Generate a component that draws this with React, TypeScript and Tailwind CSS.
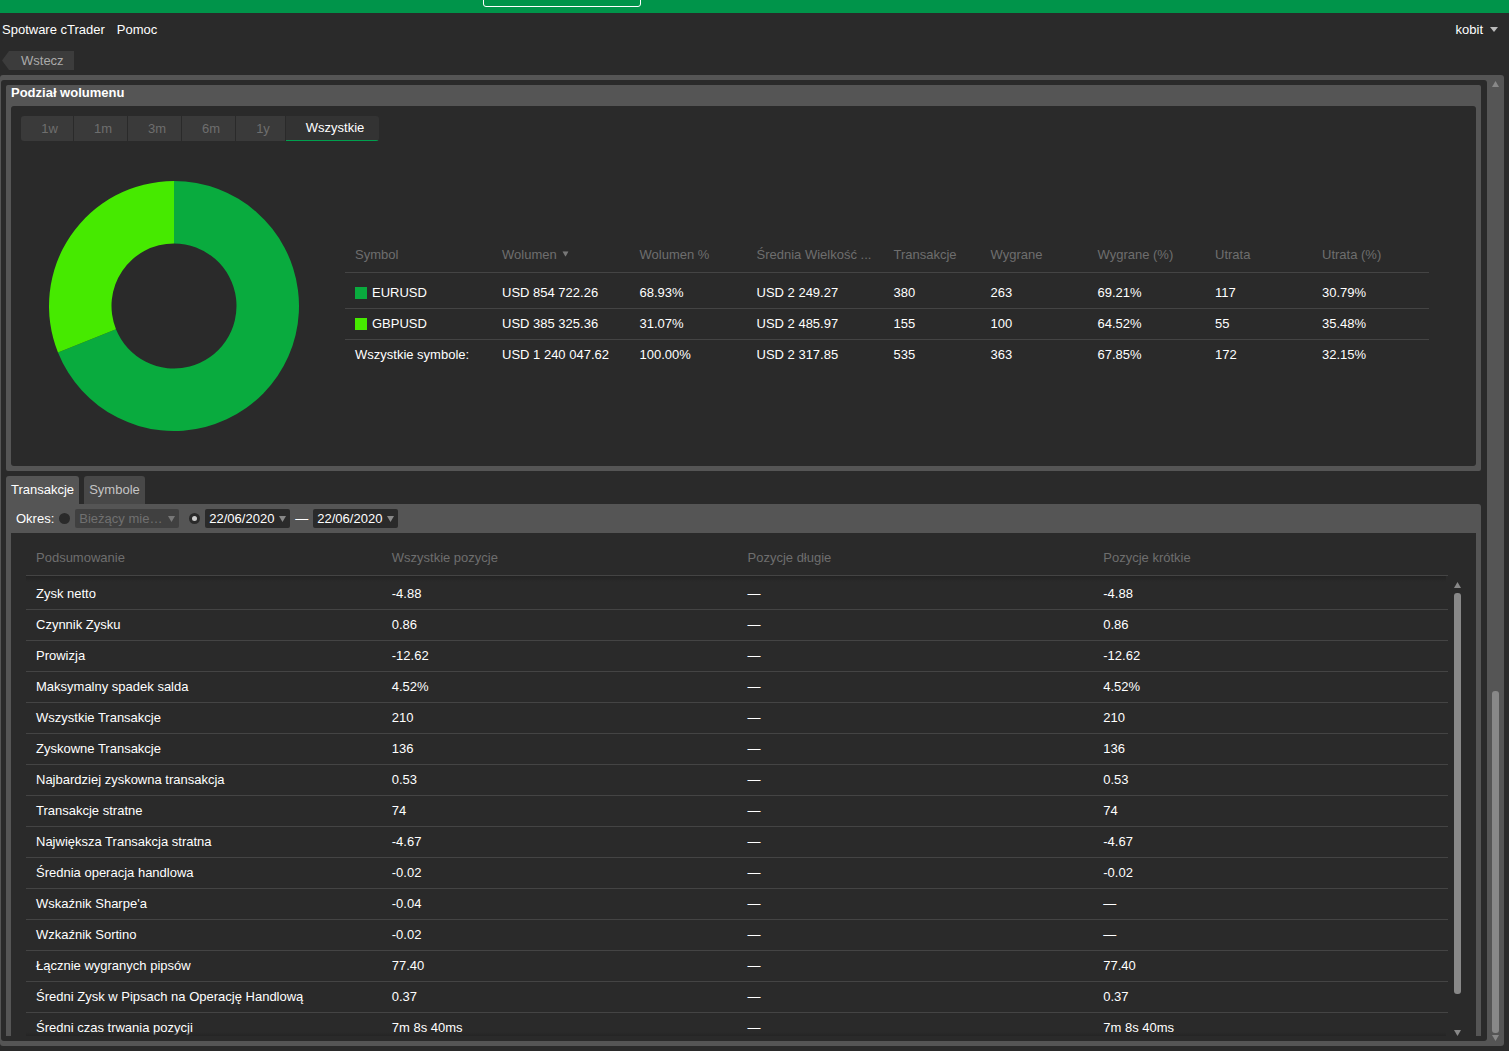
import React from "react";

const symCols = "grid grid-cols-[147px_137.5px_117px_137px_97px_107px_117.5px_107px_117px]";

const volumeRows = [
  { sym: "EURUSD", color: "bg-[#09ab3e]", v: ["USD 854 722.26", "68.93%", "USD 2 249.27", "380", "263", "69.21%", "117", "30.79%"] },
  { sym: "GBPUSD", color: "bg-[#46ea00]", v: ["USD 385 325.36", "31.07%", "USD 2 485.97", "155", "100", "64.52%", "55", "35.48%"] },
];
const volumeTotal = ["USD 1 240 047.62", "100.00%", "USD 2 317.85", "535", "363", "67.85%", "172", "32.15%"];

const summary: [string, string, string, string][] = [
  ["Zysk netto", "-4.88", "—", "-4.88"],
  ["Czynnik Zysku", "0.86", "—", "0.86"],
  ["Prowizja", "-12.62", "—", "-12.62"],
  ["Maksymalny spadek salda", "4.52%", "—", "4.52%"],
  ["Wszystkie Transakcje", "210", "—", "210"],
  ["Zyskowne Transakcje", "136", "—", "136"],
  ["Najbardziej zyskowna transakcja", "0.53", "—", "0.53"],
  ["Transakcje stratne", "74", "—", "74"],
  ["Największa Transakcja stratna", "-4.67", "—", "-4.67"],
  ["Średnia operacja handlowa", "-0.02", "—", "-0.02"],
  ["Wskaźnik Sharpe'a", "-0.04", "—", "—"],
  ["Wzkaźnik Sortino", "-0.02", "—", "—"],
  ["Łącznie wygranych pipsów", "77.40", "—", "77.40"],
  ["Średni Zysk w Pipsach na Operację Handlową", "0.37", "—", "0.37"],
  ["Średni czas trwania pozycji", "7m 8s 40ms", "—", "7m 8s 40ms"],
];

function polar(r: number, pct: number) {
  const a = (pct / 100) * 2 * Math.PI;
  return [125 + r * Math.sin(a), 125 - r * Math.cos(a)];
}
function slice(from: number, to: number) {
  const R = 125;
  const r = 62.5;
  const [x1, y1] = polar(R, from);
  const [x2, y2] = polar(R, to);
  const [x3, y3] = polar(r, to);
  const [x4, y4] = polar(r, from);
  const large = to - from > 50 ? 1 : 0;
  return `M${x1} ${y1}A${R} ${R} 0 ${large} 1 ${x2} ${y2}L${x3} ${y3}A${r} ${r} 0 ${large} 0 ${x4} ${y4}Z`;
}

function Caret({ className = "" }: { className?: string }) {
  return (
    <svg width="7" height="6" viewBox="0 0 7 6" className={className}>
      <path d="M0 0H7L3.5 6Z" fill="currentColor" />
    </svg>
  );
}
function CaretUp({ className = "" }: { className?: string }) {
  return (
    <svg width="7" height="6" viewBox="0 0 7 6" className={className}>
      <path d="M0 6H7L3.5 0Z" fill="currentColor" />
    </svg>
  );
}

function Select({ label, dim }: { label: string; dim?: boolean }) {
  return (
    <div
      className={`flex h-[19px] items-center justify-between rounded-[2px] pl-[4px] pr-[4px] ${
        dim ? "w-[104px] bg-[#404040] text-[#707070]" : "w-[85px] bg-[#2a2a2a] text-white"
      }`}
    >
      <span>{label}</span>
      <Caret className={dim ? "text-[#777777]" : "text-[#888888]"} />
    </div>
  );
}

export default function App() {
  return (
    <div className="flex h-[1051px] w-full flex-col overflow-hidden bg-[#2a2a2a] font-['Liberation_Sans',Arial,sans-serif] text-[13px] leading-none text-white">
      {/* Top bar */}
      <div className="relative h-[13px] shrink-0 bg-[#00944a]">
        <div className="absolute left-[483px] top-[-6px] h-[13px] w-[158px] rounded-[3px] border border-white bg-[#00944a]" />
      </div>

      {/* Nav */}
      <div className="flex h-[32px] shrink-0 items-center justify-between pl-[2px] pr-[11px]">
        <div className="flex gap-[12px]">
          <span>Spotware cTrader</span>
          <span>Pomoc</span>
        </div>
        <div className="flex items-center gap-[7px]">
          <span>kobit</span>
          <svg width="8" height="5" viewBox="0 0 8 5" className="text-[#bbbbbb]">
            <path d="M0 0H8L4 5Z" fill="currentColor" />
          </svg>
        </div>
      </div>

      {/* Back */}
      <div className="mt-[6px] h-[19px] shrink-0 pl-[2px]">
        <div className="flex h-[19px] w-[72px] items-center bg-[#3c3c3c] pl-[19px] text-[#aaaaaa] [clip-path:polygon(0_50%,7px_0,100%_0,100%_100%,7px_100%)]">
          Wstecz
        </div>
      </div>

      {/* Scrollable frame */}
      <div className="mt-[5px] flex h-[971px] w-[1504px] shrink-0 overflow-hidden rounded-[3px] bg-[#555555] pb-[5px] pl-[1px] pt-[5px]">
        <div className="min-w-0 flex-1 overflow-hidden rounded-[3px] bg-[#2a2a2a] pl-[5px] pr-[6px] pt-[5px]">
          {/* Volume panel */}
          <section className="flex h-[386px] flex-col rounded-[2px] bg-[#555555] px-[5px] pb-[5px]">
            <h2 className="flex h-[21px] shrink-0 items-center pb-[6px] text-[13px] font-bold">Podział wolumenu</h2>
            <div className="flex-1 rounded-[3px] bg-[#2a2a2a] pl-[10px] pt-[10px]">
              <div className="flex h-[25px] w-[358px] gap-[1px] overflow-hidden rounded-[3px] text-[#6e6e6e]">
                <div className="flex w-[52px] items-center justify-center bg-[#3a3a3a] pl-[5px]">1w</div>
                <div className="flex w-[53px] items-center justify-center bg-[#3a3a3a] pl-[5px]">1m</div>
                <div className="flex w-[53px] items-center justify-center bg-[#3a3a3a] pl-[5px]">3m</div>
                <div className="flex w-[53px] items-center justify-center bg-[#3a3a3a] pl-[5px]">6m</div>
                <div className="flex w-[49px] items-center justify-center bg-[#3a3a3a] pl-[5px]">1y</div>
                <div className="flex w-[93px] items-center justify-center border-b border-[#00a04e] bg-[#333333] pb-[2px] pl-[5px] text-white">
                  Wszystkie
                </div>
              </div>

              <div className="mt-[40px] flex items-center">
                <svg width="250" height="250" viewBox="0 0 250 250" className="ml-[28px] shrink-0">
                  <path d={slice(0, 68.93)} fill="#09ab3e" />
                  <path d={slice(68.93, 100)} fill="#46ea00" />
                </svg>
                <div className="ml-[46px] w-[1084px]">
                  <div className={`${symCols} h-[31px] items-center border-b border-[#444444] pb-[6px] text-[#6e6e6e]`}>
                    <div className="pl-[10px]">Symbol</div>
                    <div className="flex items-center gap-[5px] pl-[10px]">
                      Wolumen
                      <Caret className="scale-90 text-[#777777]" />
                    </div>
                    <div className="pl-[10px]">Wolumen %</div>
                    <div className="whitespace-nowrap pl-[10px]">Średnia Wielkość ...</div>
                    <div className="pl-[10px]">Transakcje</div>
                    <div className="pl-[10px]">Wygrane</div>
                    <div className="pl-[10px]">Wygrane (%)</div>
                    <div className="pl-[10px]">Utrata</div>
                    <div className="pl-[10px]">Utrata (%)</div>
                  </div>
                  <div className="h-[5px]" />
                  {volumeRows.map((r) => (
                    <div key={r.sym} className={`${symCols} h-[31px] items-center border-b border-[#444444] pb-[1px]`}>
                      <div className="flex items-center gap-[5px] pl-[10px]">
                        <span className={`h-[12px] w-[12px] ${r.color}`} />
                        {r.sym}
                      </div>
                      {r.v.map((c, i) => (
                        <div key={i} className="pl-[10px]">
                          {c}
                        </div>
                      ))}
                    </div>
                  ))}
                  <div className={`${symCols} h-[30px] items-center pb-[1px]`}>
                    <div className="pl-[10px]">Wszystkie symbole:</div>
                    {volumeTotal.map((c, i) => (
                      <div key={i} className="pl-[10px]">
                        {c}
                      </div>
                    ))}
                  </div>
                </div>
              </div>
            </div>
          </section>

          {/* Tabs */}
          <div className="mt-[5px] flex h-[28px] gap-[5px]">
            <div className="flex w-[73px] items-center justify-center rounded-t-[3px] bg-[#555555] pb-[2px]">Transakcje</div>
            <div className="flex w-[61px] items-center justify-center rounded-t-[3px] bg-[#484848] pb-[2px] text-[#c4c4c4]">
              Symbole
            </div>
          </div>

          {/* Summary panel */}
          <section className="flex h-[532px] flex-col overflow-hidden rounded-tr-[3px] bg-[#555555] px-[5px]">
            <div className="flex h-[29px] shrink-0 items-center pl-[5px]">
              <span className="mr-[5px]">Okres:</span>
              <span className="mr-[5px] h-[11px] w-[11px] rounded-full bg-[#2a2a2a]" />
              <Select label="Bieżący mie…" dim />
              <span className="ml-[10px] mr-[5px] flex h-[11px] w-[11px] items-center justify-center rounded-full bg-[#2a2a2a]">
                <span className="h-[5px] w-[5px] rounded-full bg-[#cccccc]" />
              </span>
              <Select label="22/06/2020" />
              <span className="mx-[5px]">—</span>
              <Select label="22/06/2020" />
            </div>

            <div className="relative min-h-0 flex-1 overflow-hidden bg-[#2a2a2a] pl-[15px]">
              <div className="grid h-[43px] w-[1422px] grid-cols-[repeat(4,355.75px)] items-center border-b border-[#444444] pt-[6px] text-[#6e6e6e]">
                <div className="pl-[10px]">Podsumowanie</div>
                <div className="pl-[10px]">Wszystkie pozycje</div>
                <div className="pl-[10px]">Pozycje długie</div>
                <div className="pl-[10px]">Pozycje krótkie</div>
              </div>
              <div className="mt-[3px] w-[1422px]">
                {summary.map((r) => (
                  <div key={r[0]} className="grid h-[31px] grid-cols-[repeat(4,355.75px)] items-center border-b border-[#444444] pb-[2px]">
                    {r.map((c, i) => (
                      <div key={i} className="pl-[10px]">
                        {c}
                      </div>
                    ))}
                  </div>
                ))}
              </div>

              {/* Scroll shadows over the list */}
              <div className="absolute left-[15px] top-[43px] h-[6px] w-[1420px] bg-gradient-to-b from-[#232323] to-[#2a2a2a00]" />
              <div className="absolute bottom-0 left-[15px] h-[4px] w-[1420px] bg-gradient-to-t from-[#242424] to-[#2a2a2a00]" />

              {/* Inner scrollbar */}
              <div className="absolute right-[15px] top-[49px] flex h-[454px] w-[7px] flex-col items-center text-[#888888]">
                <CaretUp />
                <div className="mt-[5px] h-[401px] w-[7px] rounded-[3px] bg-[#888888]" />
                <div className="flex-1" />
                <Caret />
              </div>
            </div>
          </section>
        </div>

        {/* Outer scrollbar */}
        <div className="flex w-[17px] shrink-0 flex-col items-center text-[#888888]">
          <CaretUp className="mt-[1px]" />
          <div className="mt-[604px] h-[342px] w-[7px] rounded-[3px] bg-[#888888]" />
          <Caret className="mt-[2px]" />
        </div>
      </div>
    </div>
  );
}
